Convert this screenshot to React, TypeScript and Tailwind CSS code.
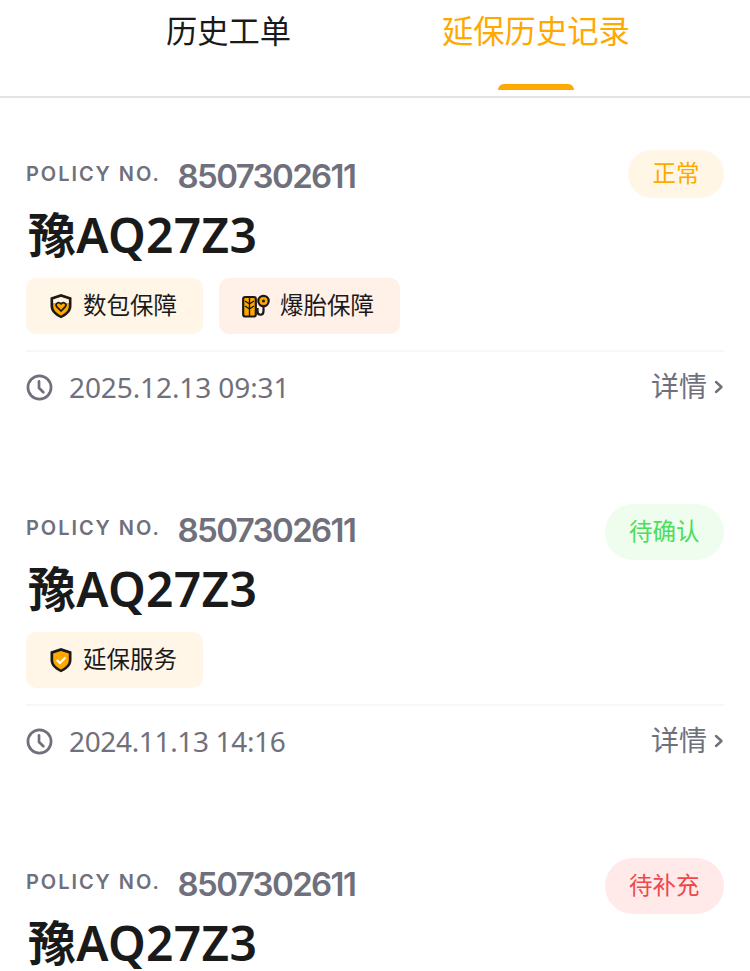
import React from "react";

const Shield = ({ heart }: { heart?: boolean }) => (
  <svg width="24" height="26" viewBox="0 0 24 26" className="shrink-0">
    <path d="M12 1 L22.5 4.5 V13 C22.5 19 17 23 12 25.2 C7 23 1.5 19 1.5 13 V4.5 Z" fill="#1a1a1a" />
    <path d="M12 4 L19.8 6.6 V13 C19.8 17.6 16 20.6 12 22.4 C8 20.6 4.2 17.6 4.2 13 V6.6 Z" fill="#ffa800" />
    {heart ? (
      <>
        <path d="M4.2 6.6 L12 4 L19.8 6.6 V10 H4.2 Z" fill="#fff3e0" />
        <path d="M12 18 L7.6 13.6 C5.8 11 9.4 8 12 10.8 C14.6 8 18.2 11 16.4 13.6 Z" fill="#ffa800" stroke="#1a1a1a" strokeWidth="1.7" />
      </>
    ) : (
      <path d="M7.8 13 L11 16 L16.4 10.4" fill="none" stroke="#fff" strokeWidth="2.2" />
    )}
  </svg>
);

const Tire = () => (
  <svg width="28" height="24" viewBox="0 0 28 24" className="shrink-0">
    <rect x="1.2" y="3" width="12.6" height="19.5" rx="2" fill="#ffa800" stroke="#1a1a1a" strokeWidth="2.2" />
    <path d="M7.5 3 V22 M3 7 L7.5 10 L12 7 M3 12 L7.5 15 L12 12" fill="none" stroke="#1a1a1a" strokeWidth="1.4" />
    <circle cx="21.5" cy="7" r="5.2" fill="#ffa800" stroke="#1a1a1a" strokeWidth="2.2" />
    <circle cx="21.5" cy="7" r="1.5" fill="#1a1a1a" />
    <path d="M21.5 12 V17 C21.5 22 15.5 22 15.5 17 V14" fill="none" stroke="#1a1a1a" strokeWidth="2.2" />
  </svg>
);

const Clock = () => (
  <svg width="27" height="27" viewBox="0 0 28 28" fill="none" stroke="#70707c" strokeWidth="2.8" strokeLinecap="round" strokeLinejoin="round" className="shrink-0">
    <circle cx="14" cy="14" r="12" />
    <path d="M13.5 7.5 V14.5 L18 19" />
  </svg>
);

const Chevron = () => (
  <svg width="10" height="14" viewBox="0 0 10 14" fill="none" stroke="#70707c" strokeWidth="2.4" strokeLinecap="round" strokeLinejoin="round" className="ml-[7px]">
    <path d="M2 2 L7.5 7 L2 12" />
  </svg>
);

type Tag = { label: string; bg: string; icon: React.ReactNode; w: string };

const Card = ({ status, statusCls, tags, time, timeCls }: { status: string; statusCls: string; tags: Tag[]; time: string; timeCls: string }) => (
  <div className="mx-[26px] h-[354px] pt-[52px]">
    <div className="flex h-[52px] items-start justify-between">
      <div className="flex items-center pt-[6px]">
        <span className="w-[151.5px] -translate-y-[2px] text-[20px] leading-[28px] font-semibold tracking-[1.95px] text-[#70707c]">POLICY NO.</span>
        <span className="text-[33px] font-semibold leading-[40px] tracking-[-1.6px] text-[#70707c]">8507302611</span>
      </div>
      <span
        className={`flex items-center justify-center rounded-[28px] px-[24.5px] text-[23.5px] ${status === "正常" ? "h-[48px]" : "h-[56px]"} ${statusCls}`}
      >
        {status}
      </span>
    </div>
    <div className="h-[76px] pl-[2px] text-[48px] font-semibold leading-[66px] tracking-[0.3px] text-[#1a1a1a]" style={{ fontFamily: '"Noto Sans", "Noto Sans CJK SC", sans-serif' }}>
      豫AQ27Z3
    </div>
    <div className="flex h-[56px] gap-4">
      {tags.map((t) => (
        <div key={t.label} className={`flex items-center justify-center gap-[10px] rounded-[10px] pr-[3px] text-[23.5px] text-[#1a1a1a] ${t.bg} ${t.w}`}>
          {t.icon}
          <span>{t.label}</span>
        </div>
      ))}
    </div>
    <div className="mt-[16px] border-t-2 border-[#f7f7f8] pt-[16px]">
      <div className="flex items-center justify-between">
        <div className="flex items-center gap-[16px] text-[28px] leading-[38px] text-[#70707c]" style={{ fontFamily: '"Noto Sans", sans-serif' }}>
          <Clock />
          <span className={timeCls}>{time}</span>
        </div>
        <div className="flex items-center text-[28px] leading-[36px] text-[#70707c]">
          详情
          <Chevron />
        </div>
      </div>
    </div>
  </div>
);

export default function App() {
  return (
    <div
      className="h-[971px] w-[750px] overflow-hidden bg-white"
      style={{ fontFamily: 'Inter, "Noto Sans CJK SC", sans-serif' }}
    >
      <div className="relative flex h-[98px] border-b-2 border-[#e4e4e4]">
        <div className="flex w-[416px] justify-center pl-[41px] pt-[10px] text-[31.3px] leading-[44px] text-[#1a1a1a]">历史工单</div>
        <div className="ml-[26px] pt-[10px] text-[31.3px] leading-[44px] text-[#ffa800]">延保历史记录</div>
        <div className="absolute bottom-[6px] left-[498px] h-[6px] w-[76px] rounded-t-[6px] bg-[#ffa800]" />
      </div>
      <Card
        status="正常"
        statusCls="bg-[#fff6e6] text-[#ffa800]"
        time="2025.12.13 09:31"
        timeCls="tracking-[-0.1px]"
        tags={[
          { label: "数包保障", bg: "bg-[#fff6e8]", icon: <Shield heart />, w: "w-[177px]" },
          { label: "爆胎保障", bg: "bg-[#fff0e8]", icon: <Tire />, w: "w-[181px]" },
        ]}
      />
      <Card
        status="待确认"
        statusCls="bg-[#eefdee] text-[#4ade5a]"
        time="2024.11.13 14:16"
        timeCls="tracking-[-0.35px]"
        tags={[{ label: "延保服务", bg: "bg-[#fff6e8]", icon: <Shield />, w: "w-[177px]" }]}
      />
      <Card
        status="待补充"
        statusCls="bg-[#ffe9e9] text-[#f0484a]"
        time="2024.11.13 14:16"
        timeCls="tracking-[-0.35px]"
        tags={[]}
      />
    </div>
  );
}
